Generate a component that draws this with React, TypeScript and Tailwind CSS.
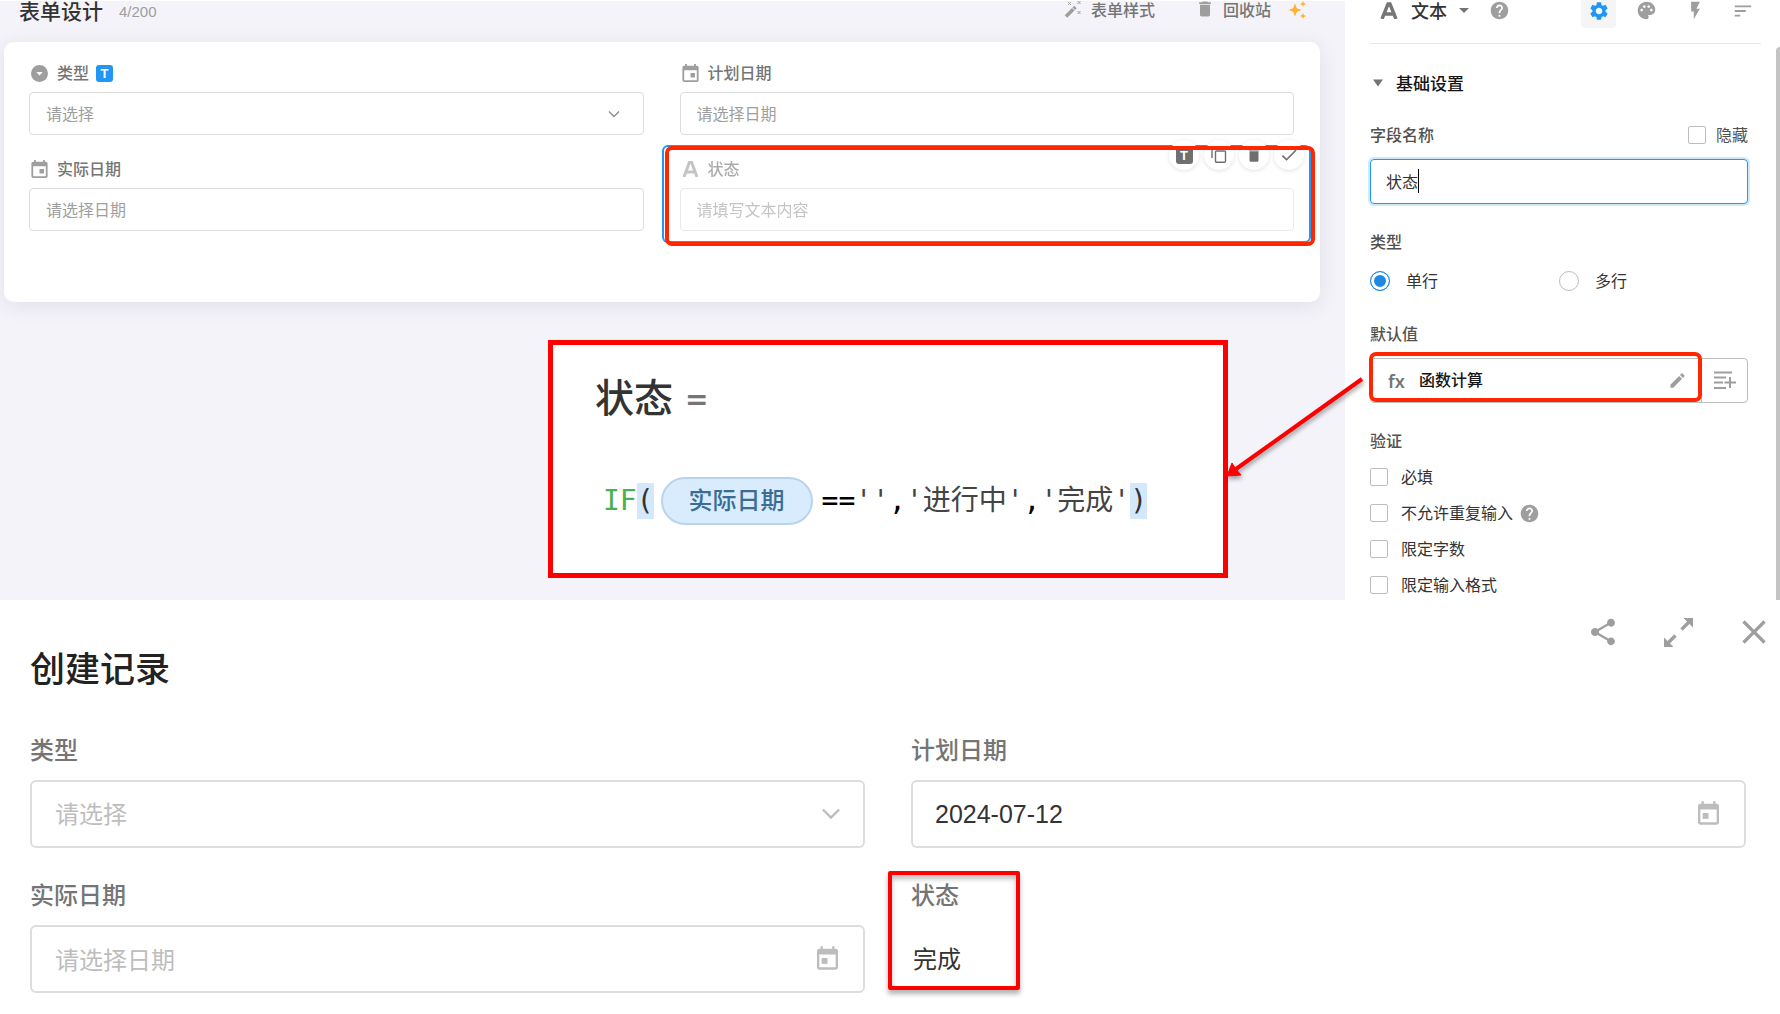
import React from "react";
import {
  MdArrowDropDown,
  MdCheck,
  MdClose,
  MdDelete,
  MdEdit,
  MdFlashOn,
  MdHelp,
  MdPalette,
  MdSettings,
  MdShare,
  MdSort,
} from "react-icons/md";

function EventIcon({ className, left = false }: { className: string; left?: boolean }) {
  return (
    <svg viewBox="0 0 18 20" className={className} fill="currentColor" aria-hidden="true">
      <path
        fillRule="evenodd"
        d="M3 0h2v2h8V0h2v2h1a2 2 0 0 1 2 2v14a2 2 0 0 1-2 2H2a2 2 0 0 1-2-2V4a2 2 0 0 1 2-2h1zM2 7v11h14V7z"
      />
      <rect x={left ? 4 : 9} y="10" width="5" height="5" />
    </svg>
  );
}

function WandIcon() {
  return (
    <svg viewBox="0 0 18 18" className="size-[18px] text-[#9e9e9e]" aria-hidden="true">
      <path d="M2 16.500 11.500 7" stroke="currentColor" strokeWidth="3.6" />
      <path
        d="M4 2l3 3M7 2 4 5M13.500 1l3 3M16.500 1l-3 3M13.500 11l3 3M16.500 11l-3 3"
        stroke="currentColor"
        strokeWidth="1"
      />
      <path d="m8 7.500 3 3" stroke="#f5f4fa" strokeWidth="1" />
    </svg>
  );
}

function SparkleIcon() {
  return (
    <svg viewBox="0 0 18 18" className="size-[18px] text-[#ffb22b]" fill="currentColor" aria-hidden="true">
      <path d="M7 2.500 8.800 7.200 13.500 9 8.800 10.800 7 15.500 5.200 10.800.5 9l4.700-1.800zM15 0l.9 2.100L18 3l-2.100.9L15 6l-.9-2.100L12 3l2.100-.9zM15 12l.9 2.100 2.100.9-2.100.9L15 18l-.9-2.100L12 15l2.100-.9z" />
    </svg>
  );
}

function CopyIcon() {
  return (
    <svg viewBox="0 0 16 16" className="size-4" fill="none" stroke="currentColor" strokeWidth="1.4" aria-hidden="true">
      <path d="M1 11V1.500h9" />
      <rect x="4.500" y="4" width="10" height="11.300" rx="1" />
    </svg>
  );
}

function ExpandIcon() {
  return (
    <svg viewBox="0 0 29 29" className="size-[29px]" aria-hidden="true">
      <path d="M19.500 0H29v9.500zM0 19.500V29h9.500z" fill="currentColor" />
      <path d="m17.500 11.500 8-8M11.500 17.500l-8 8" stroke="currentColor" strokeWidth="3.200" />
    </svg>
  );
}

function AddToListIcon() {
  return (
    <svg viewBox="0 0 22 19" className="h-[19px] w-[22px]" stroke="currentColor" strokeWidth="2" aria-hidden="true">
      <path d="M0 1.500h18M0 6.500h12M0 11.500h9M0 17h12M10.500 11.500H22M16 6v11" />
    </svg>
  );
}

function Chevron({ className }: { className: string }) {
  return (
    <svg viewBox="0 0 12 8" className={className} fill="none" stroke="currentColor" aria-hidden="true">
      <path d="m1 1.500 5 5 5-5" strokeWidth="1.400" />
    </svg>
  );
}

function LetterBadge({ className }: { className: string }) {
  return (
    <span
      className={`flex size-[17px] items-center justify-center rounded-[3px] font-['Liberation_Sans'] text-[13px] leading-none font-bold text-white ${className}`}
    >
      T
    </span>
  );
}

const designLabel = "flex h-5 items-center gap-[9px] text-[16px] leading-5 font-medium text-[#757575]";
const designBox =
  "mt-[9px] h-[43px] w-full appearance-none rounded-[4px] border border-[#dddddd] bg-white px-4 pb-[2px] text-[16px] text-[#9e9e9e] placeholder:text-[#9e9e9e] outline-none";
const recordLabel = "block pb-[3px] text-[24px] leading-[29px] font-medium text-[#757575]";
const recordBox =
  "h-[68px] w-full appearance-none rounded-[6px] border-2 border-[#dddddd] bg-white px-[23px] pb-[2px] text-[24px] text-[#bdbdbd] placeholder:text-[#bdbdbd] outline-none";
const settingLabel = "pb-[2px] text-[16px] leading-[22px] font-medium text-[#515151]";
const checkbox = "size-[18px] shrink-0 appearance-none rounded-[2px] border border-[#bdbdbd] bg-white";
const toolButton =
  "flex size-[30px] items-center justify-center rounded-full bg-white text-[#6f6f6f] shadow-[0_1px_4px_rgba(0,0,0,0.12)]";

const rules = [
  { id: "required", text: "必填" },
  { id: "unique", text: "不允许重复输入", help: true },
  { id: "length", text: "限定字数" },
  { id: "format", text: "限定输入格式" },
];

function FormulaCallout() {
  return (
    <div className="absolute top-[339px] right-[117px] w-[680px] border-[5px] border-[#ff0000] bg-white pt-[22px] pb-12 pl-[42px]">
      <h2 className="flex items-center gap-3 text-[39px] leading-[56px] font-medium text-[#333333]">
        状态
        <span className="pt-[10px] font-['DejaVu_Sans'] text-[28px] leading-8 font-bold text-[#757575]">=</span>
      </h2>
      <p className="mt-[54px] flex h-12 items-center pl-2 font-['DejaVu_Sans_Mono','Noto_Sans_CJK_SC',monospace] text-[28px] leading-9 whitespace-nowrap text-[#444444]">
        <span className="text-[#4caf50]">IF</span>
        <span className="bg-[#d3e9fb] text-[#333333]">(</span>
        <span className="mr-[9px] ml-[7px] flex h-12 items-center rounded-full border-2 border-[#b9d4ea] bg-[#d8ecfd] px-[26px] text-[24px] font-medium text-[#3b6c94]">
          实际日期
        </span>
        <span className="text-black">==</span>
        <span>''</span>
        <span className="text-black">,</span>
        <span>'进行中'</span>
        <span className="text-black">,</span>
        <span>'完成'</span>
        <span className="bg-[#d3e9fb] text-[#333333]">)</span>
      </p>
    </div>
  );
}

function Arrow() {
  return (
    <svg
      viewBox="0 0 144 110"
      className="pointer-events-none absolute top-[371px] -right-[21px] z-20 h-[110px] w-36 drop-shadow-[1px_3px_2px_rgba(0,0,0,0.35)]"
      aria-hidden="true"
    >
      <path d="M140 7 14 97" stroke="#ff0000" strokeWidth="4" />
      <path d="M5 104 10 91l3 5 6 7z" fill="#ff0000" stroke="#ff0000" />
    </svg>
  );
}

function Designer() {
  return (
    <main className="relative min-w-0 flex-1 border-t border-white bg-[#f4f3f9] pr-[25px] pl-1">
      <header className="flex h-[18px] items-center justify-between pr-[14px] pl-[15px]">
        <div className="flex items-center gap-4">
          <h1 className="text-[21px] leading-5 font-medium text-[#333333]">表单设计</h1>
          <span className="pt-[3px] font-['Liberation_Sans'] text-[15px] leading-5 text-[#9e9e9e]">4/200</span>
        </div>
        <div className="flex items-center text-[16px] leading-[18px] font-medium text-[#757575]">
          <button className="flex items-center gap-[9px] pb-[2px]">
            <WandIcon />
            表单样式
          </button>
          <button className="ml-10 flex items-center gap-2 pb-[2px]">
            <MdDelete className="size-5 text-[#9e9e9e]" />
            回收站
          </button>
          <button className="ml-[17px]" aria-label="AI">
            <SparkleIcon />
          </button>
        </div>
      </header>

      <div className="mt-[23px] rounded-[10px] bg-white pt-[21px] pr-[26px] pb-[71px] pl-[25px] shadow-[0_4px_20px_rgba(60,50,90,0.10)]">
        <div className="grid grid-cols-2 gap-x-9 gap-y-6">
          <div>
            <label htmlFor="d-type" className={designLabel}>
              <svg viewBox="0 0 17 17" className="ml-[2px] size-[17px]" aria-hidden="true">
                <circle cx="8.5" cy="8.5" r="8.5" fill="#9e9e9e" />
                <path d="M5.300 7h6.400l-3.200 3.500z" fill="#ffffff" />
              </svg>
              <span className="pb-[2px]">类型</span>
              <LetterBadge className="-ml-[2px] bg-[#2196f3]" />
            </label>
            <div className="relative">
              <select id="d-type" className={designBox}>
                <option>请选择</option>
              </select>
              <Chevron className="pointer-events-none absolute top-[27px] right-6 h-2 w-3 text-[#8e8e8e]" />
            </div>
          </div>
          <div>
            <label htmlFor="d-plan" className={designLabel}>
              <EventIcon className="ml-[2px] h-[18px] w-[17px] text-[#9e9e9e]" />
              <span className="pb-[2px]">计划日期</span>
            </label>
            <input id="d-plan" className={designBox} placeholder="请选择日期" />
          </div>
          <div>
            <label htmlFor="d-actual" className={designLabel}>
              <EventIcon className="ml-[2px] h-[18px] w-[17px] text-[#9e9e9e]" />
              <span className="pb-[2px]">实际日期</span>
            </label>
            <input id="d-actual" className={designBox} placeholder="请选择日期" />
          </div>
          <div className="relative">
            <div className="absolute -top-[14px] -right-[17px] -bottom-[12px] -left-[18px] rounded-[6px] border-2 border-[#2196f3]" />
            <div className="relative opacity-60">
              <label htmlFor="d-state" className={designLabel}>
                <svg viewBox="0 0 17 16" className="ml-[2px] h-4 w-[17px] text-[#9e9e9e]" aria-hidden="true">
                  <path
                    d="M2 16 7.500 1h2L15 16M4.500 11h8"
                    fill="none"
                    stroke="currentColor"
                    strokeWidth="3"
                  />
                </svg>
                <span className="pb-[2px]">状态</span>
              </label>
              <input id="d-state" className={designBox} placeholder="请填写文本内容" />
            </div>
            <div className="absolute -top-[19px] right-[-10px] flex gap-[5px]">
              <button className={toolButton} aria-label="标题样式">
                <LetterBadge className="bg-[#6f6f6f]" />
              </button>
              <button className={toolButton} aria-label="复制">
                <CopyIcon />
              </button>
              <button className={toolButton} aria-label="删除">
                <MdDelete className="size-[18px]" />
              </button>
              <button className={toolButton} aria-label="完成">
                <MdCheck className="size-5" />
              </button>
            </div>
            <div className="pointer-events-none absolute -top-[13px] -right-[21px] -bottom-[15px] -left-[15px] rounded-[7px] border-4 border-[#ff2600]" />
          </div>
        </div>
      </div>

      <FormulaCallout />
      <Arrow />
    </main>
  );
}

function Settings() {
  return (
    <aside className="relative w-[435px] shrink-0 bg-white pr-8 pb-[3px] pl-[25px]">
      <div className="-mr-[13px] flex h-11 items-start justify-between border-b border-[#e6e6e6] pr-[7px] pl-[10px]">
        <div className="flex h-5 items-center">
          <button className="flex items-center text-[18px] leading-5 font-medium text-[#333333]">
            <svg viewBox="0 0 18 18" className="mr-[13px] size-[18px] text-[#757575]" aria-hidden="true">
              <path d="M2 18 8 3h2l6 15M4.500 13h9" fill="none" stroke="currentColor" strokeWidth="3.400" />
            </svg>
            文本
            <MdArrowDropDown className="ml-[5px] size-6 text-[#757575]" />
          </button>
          <MdHelp className="ml-[13px] size-[21px] text-[#9e9e9e]" />
        </div>
        <div className="flex items-start text-[#9e9e9e]">
          <button
            className="flex h-7 w-[35px] items-start justify-center rounded-b-[4px] bg-[#f5f5f5] text-[#2196f3]"
            aria-label="设置"
          >
            <MdSettings className="size-[22px]" />
          </button>
          <button className="ml-5" aria-label="样式">
            <MdPalette className="size-[21px]" />
          </button>
          <button className="ml-7" aria-label="事件">
            <MdFlashOn className="size-[21px]" />
          </button>
          <button className="ml-[26px]" aria-label="排序">
            <MdSort className="size-[22px]" />
          </button>
        </div>
      </div>

      <h2 className="mt-[27px] flex h-6 items-center gap-[9px] text-[17px] leading-6 font-medium text-[#151515]">
        <svg viewBox="0 0 10 8" className="mr-1 ml-[3px] h-2 w-[10px] text-[#757575]" aria-hidden="true">
          <path d="M0 .500h10L5 7.500z" fill="currentColor" />
        </svg>
        基础设置
      </h2>

      <div className="mt-7 flex items-center justify-between">
        <label htmlFor="field-name" className={settingLabel}>
          字段名称
        </label>
        <label className="flex items-center gap-[10px] text-[16px] leading-[22px] text-[#515151]">
          <input type="checkbox" className={checkbox} />
          <span className="pb-[2px]">隐藏</span>
        </label>
      </div>
      <div className="relative mt-3">
        <input
          id="field-name"
          defaultValue="状态"
          className="h-[45px] w-full rounded-[4px] border border-[#2196f3] px-[15px] pb-[2px] text-[16px] text-[#333333] shadow-[0_0_0_2px_rgba(33,150,243,0.22)] outline-none"
        />
        <span className="absolute top-[10px] left-12 h-6 w-px bg-black" />
      </div>

      <fieldset>
        <legend className={`pt-[26px] ${settingLabel}`}>类型</legend>
        <div className="mt-[15px] grid grid-cols-2 text-[16px] leading-[22px] text-[#333333]">
          <label className="flex items-center gap-4">
            <input
              type="radio"
              name="line"
              defaultChecked
              className="size-5 appearance-none rounded-full border border-[#1e88e5] bg-[#1e88e5] shadow-[inset_0_0_0_3px_#ffffff]"
            />
            <span className="pb-[2px]">单行</span>
          </label>
          <label className="flex items-center gap-4">
            <input type="radio" name="line" className="size-5 appearance-none rounded-full border border-[#bdbdbd]" />
            <span className="pb-[2px]">多行</span>
          </label>
        </div>
      </fieldset>

      <h3 className={`mt-[29px] ${settingLabel}`}>默认值</h3>
      <div className="relative mt-3 flex h-[45px] rounded-[4px] border border-[#bdbdbd]">
        <button className="flex flex-1 items-center pr-[14px] pl-[17px] text-[16px] leading-[22px] font-medium text-[#151515]">
          <span className="w-[31px] text-left font-['Noto_Sans'] text-[18px] font-semibold text-[#757575]">fx</span>
          <span className="pb-[3px]">函数计算</span>
          <MdEdit className="ml-auto size-[19px] text-[#9e9e9e]" />
        </button>
        <button
          className="flex w-[46px] items-center justify-center border-l border-[#bdbdbd] text-[#9e9e9e]"
          aria-label="添加"
        >
          <AddToListIcon />
        </button>
        <div className="pointer-events-none absolute -top-[7px] right-[45px] bottom-0 -left-[2px] rounded-[7px] border-4 border-[#ff2600]" />
      </div>

      <h3 className={`mt-[26px] ${settingLabel}`}>验证</h3>
      <div className="mt-3 flex flex-col gap-3 text-[16px] leading-[22px] text-[#333333]">
        {rules.map((rule) => (
          <label key={rule.id} className="flex items-center">
            <input type="checkbox" className={checkbox} />
            <span className="ml-[13px] pb-[2px]">{rule.text}</span>
            {rule.help && <MdHelp className="ml-[6px] size-[21px] text-[#9e9e9e]" />}
          </label>
        ))}
      </div>
      <div className="absolute top-[47px] right-0 bottom-0 w-1 rounded-tl-[4px] bg-[#c4c4c4]" />
    </aside>
  );
}

function CreateRecord() {
  return (
    <section className="bg-white pt-[18px] pr-[34px] pb-[22px] pl-[30px]">
      <div className="-mr-7 flex h-7 items-center justify-end gap-[41px] text-[#9e9e9e]">
        <button className="mr-1" aria-label="分享">
          <MdShare className="size-8" />
        </button>
        <button aria-label="全屏">
          <ExpandIcon />
        </button>
        <button aria-label="关闭">
          <MdClose className="size-10" />
        </button>
      </div>
      <h2 className="pb-1 text-[35px] leading-[42px] font-medium text-[#222222]">创建记录</h2>
      <div className="mt-[42px] grid grid-cols-2 gap-x-[46px] gap-y-[31px]">
        <div>
          <label htmlFor="r-type" className={recordLabel}>
            类型
          </label>
          <div className="relative mt-[14px]">
            <select id="r-type" className={recordBox}>
              <option>请选择</option>
            </select>
            <Chevron className="pointer-events-none absolute top-[27px] right-6 h-[13px] w-5 text-[#bdbdbd]" />
          </div>
        </div>
        <div>
          <label htmlFor="r-plan" className={recordLabel}>
            计划日期
          </label>
          <div className="relative mt-[14px]">
            <input
              id="r-plan"
              defaultValue="2024-07-12"
              className="h-[68px] w-full rounded-[6px] border-2 border-[#dddddd] px-[22px] font-['Liberation_Sans'] text-[25px] text-[#333333] outline-none"
            />
            <EventIcon left className="absolute top-[21px] right-[27px] h-6 w-[21px] text-[#bdbdbd]" />
          </div>
        </div>
        <div>
          <label htmlFor="r-actual" className={recordLabel}>
            实际日期
          </label>
          <div className="relative mt-[14px]">
            <input id="r-actual" placeholder="请选择日期" className={recordBox} />
            <EventIcon left className="absolute top-[21px] right-[27px] h-6 w-[21px] text-[#bdbdbd]" />
          </div>
        </div>
        <div className="relative">
          <h3 className={recordLabel}>状态</h3>
          <p className="mt-[14px] pb-[2px] pl-[2px] text-[24px] leading-[66px] text-[#333333]">完成</p>
          <div className="pointer-events-none absolute -top-2 -left-[23px] h-[119px] w-[132px] rounded-[2px] border-4 border-[#ff0000] shadow-[0_4px_5px_rgba(0,0,0,0.3),inset_0_4px_5px_rgba(0,0,0,0.25)]" />
        </div>
      </div>
    </section>
  );
}

export default function App() {
  return (
    <div className="min-h-screen overflow-x-hidden bg-white font-['Noto_Sans_CJK_SC',sans-serif]">
      <div className="flex">
        <Designer />
        <Settings />
      </div>
      <CreateRecord />
    </div>
  );
}
